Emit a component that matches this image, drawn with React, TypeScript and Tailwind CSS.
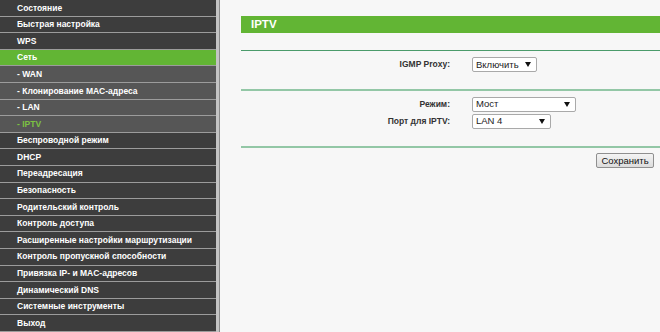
import React from "react";

type Item = { label: string; kind: "main" | "active" | "sub" | "subActive" };

const items: Item[] = [
  { label: "Состояние", kind: "main" },
  { label: "Быстрая настройка", kind: "main" },
  { label: "WPS", kind: "main" },
  { label: "Сеть", kind: "active" },
  { label: "- WAN", kind: "sub" },
  { label: "- Клонирование MAC-адреса", kind: "sub" },
  { label: "- LAN", kind: "sub" },
  { label: "- IPTV", kind: "subActive" },
  { label: "Беспроводной режим", kind: "main" },
  { label: "DHCP", kind: "main" },
  { label: "Переадресация", kind: "main" },
  { label: "Безопасность", kind: "main" },
  { label: "Родительский контроль", kind: "main" },
  { label: "Контроль доступа", kind: "main" },
  { label: "Расширенные настройки маршрутизации", kind: "main" },
  { label: "Контроль пропускной способности", kind: "main" },
  { label: "Привязка IP- и MAC-адресов", kind: "main" },
  { label: "Динамический DNS", kind: "main" },
  { label: "Системные инструменты", kind: "main" },
  { label: "Выход", kind: "main" },
];

function bgFor(kind: Item["kind"]) {
  if (kind === "active") return "bg-[#62b534] text-white";
  if (kind === "sub") return "bg-[#565656] text-white";
  if (kind === "subActive") return "bg-[#565656] text-[#7cc242]";
  return "bg-[#3d3d3d] text-white";
}

function Select({ value, width }: { value: string; width: string }) {
  return (
    <div
      className={`${width} h-[15px] bg-white border border-[#a9a9a9] rounded-[2px] flex items-center justify-between pl-[3px] pr-[5px] text-[9.5px] text-[#222]`}
    >
      <span className="leading-none">{value}</span>
      <svg width="6" height="5" viewBox="0 0 6 5">
        <path d="M0 0 L6 0 L3 5 Z" fill="#111" />
      </svg>
    </div>
  );
}

export default function App() {
  return (
    <div
      className="flex w-[660px] h-[332px] overflow-hidden bg-[#f7f7f7]"
      style={{ fontFamily: '"Liberation Sans", Arial, sans-serif' }}
    >
      <div className="w-[216px] h-[332px] flex flex-col shrink-0">
        {items.map((it) => (
          <div
            key={it.label}
            className={`flex-1 flex items-center pl-[17px] border-b-[1.6px] border-[#9c9c9c] font-bold text-[8.5px] leading-none whitespace-nowrap ${bgFor(it.kind)}`}
          >
            {it.label}
          </div>
        ))}
      </div>
      <div className="w-[3px] h-full bg-[#c4c4c4] shrink-0" />
      <div className="w-[1px] h-full bg-[#8a8a8a] shrink-0" />
      <div className="flex-1 flex flex-col pt-[16px] pl-[21px]">
        <div className="h-[17px] bg-[#62b534] flex items-center pl-[10px] text-white font-bold text-[11.5px]">
          IPTV
        </div>
        <div className="mt-[17px] h-[1px] bg-[#4b9b6b]" />
        <div className="mt-[6px] flex items-center h-[15px]">
          <div className="w-[209px] text-right font-bold text-[8.5px] text-[#333]">IGMP Proxy:</div>
          <div className="ml-[22px]">
            <Select value="Включить" width="w-[65px]" />
          </div>
        </div>
        <div className="mt-[17px] h-[2px] bg-[#93c7a6]" />
        <div className="mt-[6px] flex items-center h-[14px]">
          <div className="w-[209px] text-right font-bold text-[8.5px] text-[#333]">Режим:</div>
          <div className="ml-[22px]">
            <Select value="Мост" width="w-[104px]" />
          </div>
        </div>
        <div className="mt-[3px] flex items-center h-[14px]">
          <div className="w-[209px] text-right font-bold text-[8.5px] text-[#333]">Порт для IPTV:</div>
          <div className="ml-[22px]">
            <Select value="LAN 4" width="w-[79px]" />
          </div>
        </div>
        <div className="mt-[18px] h-[2px] bg-[#93c7a6]" />
        <div className="mt-[5px] flex justify-end pr-[6px]">
          <button className="h-[15px] w-[58px] border border-[#8f8f8f] rounded-[2px] bg-gradient-to-b from-[#f4f4f4] to-[#dcdcdc] text-[9.5px] text-[#111] leading-none flex items-center justify-center">
            Сохранить
          </button>
        </div>
      </div>
    </div>
  );
}
